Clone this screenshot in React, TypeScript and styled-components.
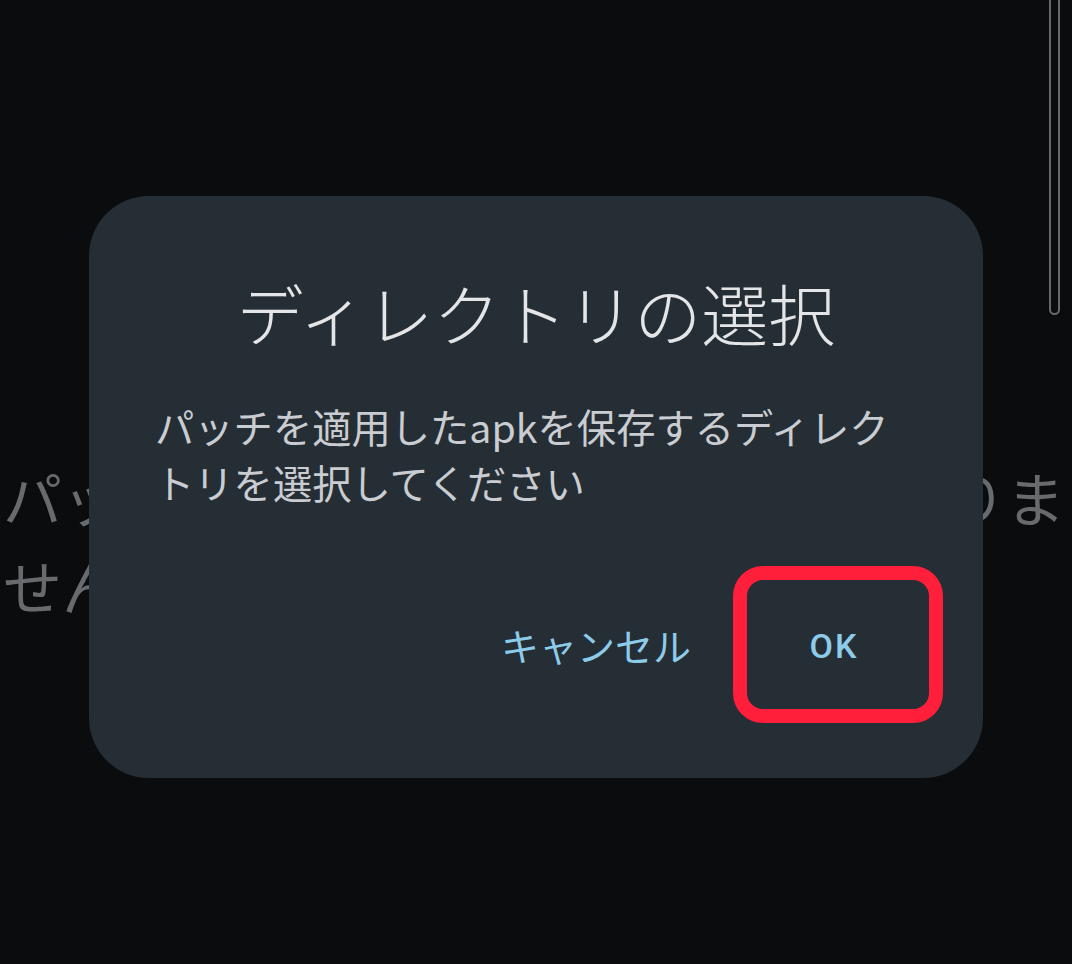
import React from 'react';
import styled, { createGlobalStyle } from 'styled-components';

const GlobalStyle = createGlobalStyle`
  html, body {
    margin: 0;
    padding: 0;
    background-color: #0b0c0e;
  }
  body {
    font-family: 'Noto Sans CJK JP', 'Noto Sans', sans-serif;
  }
`;

const Screen = styled.div`
  position: relative;
  width: 1072px;
  height: 964px;
  overflow: hidden;
  background-color: #0b0c0e;
`;

const EmptyMessage = styled.p`
  margin: 0;
  padding: 453px 0 0 3px;
  width: 1067px;
  font-size: 59px;
  line-height: 88px;
  color: #686b6d;
  word-break: break-all;
`;

const ScrollThumb = styled.div`
  position: absolute;
  top: -20px;
  right: 12px;
  width: 7px;
  height: 331px;
  border: 2.5px solid #646a6e;
  border-radius: 0 0 8px 8px;
`;

const Overlay = styled.div`
  position: absolute;
  inset: 0;
  display: flex;
  justify-content: center;
  align-items: flex-start;
  padding-top: 196px;
`;

const Dialog = styled.div`
  width: 894px;
  box-sizing: border-box;
  padding: 76px 40px 55px 40px;
  background-color: #252d35;
  border-radius: 60px;
  display: flex;
  flex-direction: column;
`;

const Title = styled.h2`
  margin: 0;
  text-align: center;
  font-size: 67px;
  font-weight: 300;
  line-height: 79px;
  color: #e3e5e7;
`;

const Message = styled.p`
  margin: 47px 40px 0 26px;
  font-size: 39.3px;
  line-height: 56px;
  color: #c9ccd0;
  word-break: break-all;
`;

const Actions = styled.div`
  margin-top: 56px;
  display: flex;
  justify-content: flex-end;
  align-items: center;
  gap: 42px;
`;

const TextButton = styled.button<{ $highlighted?: boolean }>`
  border: ${({ $highlighted }) => ($highlighted ? '14px solid #ff1f3a' : 'none')};
  border-radius: 30px;
  background: transparent;
  box-sizing: border-box;
  width: ${({ $highlighted }) => ($highlighted ? '210px' : 'auto')};
  height: ${({ $highlighted }) => ($highlighted ? '157px' : 'auto')};
  padding: 0;
  display: flex;
  align-items: center;
  justify-content: center;
  font-family: 'Noto Sans CJK JP', 'Noto Sans', sans-serif;
  font-size: 38px;
  line-height: 1.2;
  color: #8dcbea;
  cursor: pointer;
`;

const OkLabel = styled.span`
  font-family: Roboto, 'Noto Sans', sans-serif;
  font-weight: 500;
  font-size: 34px;
  letter-spacing: 2px;
  margin: 4px 8px 0 0;
`;

export default function App() {
  return (
    <>
      <GlobalStyle />
      <Screen>
        <EmptyMessage>パッチを適用済みのアプリがまだありません</EmptyMessage>
        <ScrollThumb />
        <Overlay>
          <Dialog>
            <Title>ディレクトリの選択</Title>
            <Message>パッチを適用したapkを保存するディレクトリを選択してください</Message>
            <Actions>
              <TextButton>キャンセル</TextButton>
              <TextButton $highlighted>
                <OkLabel>OK</OkLabel>
              </TextButton>
            </Actions>
          </Dialog>
        </Overlay>
      </Screen>
    </>
  );
}
